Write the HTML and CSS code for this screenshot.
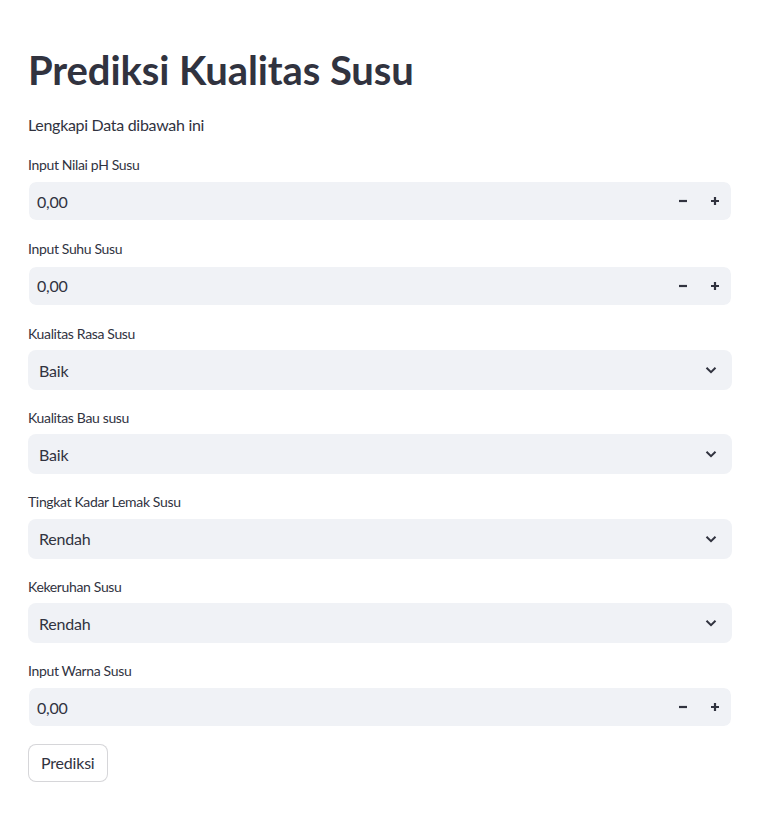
FILE: index.html
```html
<!DOCTYPE html>
<html lang="id">
<head>
<meta charset="utf-8">
<title>Prediksi Kualitas Susu</title>
<link rel="stylesheet" href="styles.css">
</head>
<body>
<main class="main">
  <h1 class="title">Prediksi Kualitas Susu</h1>
  <p class="lead">Lengkapi Data dibawah ini</p>

  <div class="field">
    <div class="label">Input Nilai pH Susu</div>
    <div class="num">
      <span class="num-value">0,00</span>
      <span class="step"><svg width="10" height="10" viewBox="0 0 10 10"><path d="M1 5h8" stroke="#31333f" stroke-width="2.2"/></svg></span>
      <span class="step"><svg width="10" height="10" viewBox="0 0 10 10"><path d="M1 5h8M5 1v8" stroke="#31333f" stroke-width="2.2"/></svg></span>
    </div>
  </div>

  <div class="field">
    <div class="label">Input Suhu Susu</div>
    <div class="num">
      <span class="num-value">0,00</span>
      <span class="step"><svg width="10" height="10" viewBox="0 0 10 10"><path d="M1 5h8" stroke="#31333f" stroke-width="2.2"/></svg></span>
      <span class="step"><svg width="10" height="10" viewBox="0 0 10 10"><path d="M1 5h8M5 1v8" stroke="#31333f" stroke-width="2.2"/></svg></span>
    </div>
  </div>

  <div class="field">
    <div class="label">Kualitas Rasa Susu</div>
    <div class="select">
      <span class="select-value">Baik</span>
      <svg class="chev" width="12" height="8" viewBox="0 0 12 8"><path d="M1.5 1.8L6 6.2l4.5-4.4" fill="none" stroke="#31333f" stroke-width="2"/></svg>
    </div>
  </div>

  <div class="field">
    <div class="label">Kualitas Bau susu</div>
    <div class="select">
      <span class="select-value">Baik</span>
      <svg class="chev" width="12" height="8" viewBox="0 0 12 8"><path d="M1.5 1.8L6 6.2l4.5-4.4" fill="none" stroke="#31333f" stroke-width="2"/></svg>
    </div>
  </div>

  <div class="field">
    <div class="label">Tingkat Kadar Lemak Susu</div>
    <div class="select">
      <span class="select-value">Rendah</span>
      <svg class="chev" width="12" height="8" viewBox="0 0 12 8"><path d="M1.5 1.8L6 6.2l4.5-4.4" fill="none" stroke="#31333f" stroke-width="2"/></svg>
    </div>
  </div>

  <div class="field">
    <div class="label">Kekeruhan Susu</div>
    <div class="select">
      <span class="select-value">Rendah</span>
      <svg class="chev" width="12" height="8" viewBox="0 0 12 8"><path d="M1.5 1.8L6 6.2l4.5-4.4" fill="none" stroke="#31333f" stroke-width="2"/></svg>
    </div>
  </div>

  <div class="field">
    <div class="label">Input Warna Susu</div>
    <div class="num">
      <span class="num-value">0,00</span>
      <span class="step"><svg width="10" height="10" viewBox="0 0 10 10"><path d="M1 5h8" stroke="#31333f" stroke-width="2.2"/></svg></span>
      <span class="step"><svg width="10" height="10" viewBox="0 0 10 10"><path d="M1 5h8M5 1v8" stroke="#31333f" stroke-width="2.2"/></svg></span>
    </div>
  </div>

  <div><button class="btn" type="button">Prediksi</button></div>
</main>
</body>
</html>
```

FILE: styles.css
```css
* { box-sizing: border-box; }

html, body {
  margin: 0;
  padding: 0;
  background: #ffffff;
}

body {
  font-family: Lato, "Noto Sans", sans-serif;
  color: #31333f;
}

.main {
  width: 704px;
  margin-left: 28px;
  padding-top: 44px;
  display: flex;
  flex-direction: column;
  gap: 16.33px;
}

.title {
  margin: 0;
  font-size: 40px;
  line-height: 52.8px;
  font-weight: 700;
  letter-spacing: -0.1px;
  color: #31333f;
}

.lead {
  margin: 0;
  font-size: 16px;
  line-height: 24px;
  letter-spacing: -0.3px;
}

.field {
  display: flex;
  flex-direction: column;
}

.label {
  height: 24px;
  margin-bottom: 4px;
  padding-bottom: 2px;
  display: flex;
  align-items: center;
  font-size: 14px;
  letter-spacing: -0.35px;
}

.num {
  height: 40px;
  border: 1px solid #ffffff;
  border-radius: 8px;
  background: #f0f2f6;
  background-clip: padding-box;
  display: flex;
  align-items: center;
}

.num-value {
  flex: 1;
  padding-left: 8px;
  font-size: 16px;
  letter-spacing: -0.2px;
}

.step {
  width: 32px;
  height: 38px;
  display: flex;
  align-items: center;
  justify-content: center;
}

.select {
  height: 40px;
  border-radius: 8px;
  background: #f0f2f6;
  display: flex;
  align-items: center;
  padding: 0 15px 0 11px;
}

.select-value {
  flex: 1;
  font-size: 16px;
  letter-spacing: -0.2px;
}

.chev { display: block; }

.btn {
  height: 38px;
  padding: 0 12px;
  border: 1px solid rgba(49, 51, 63, 0.2);
  border-radius: 8px;
  background: #ffffff;
  font-family: inherit;
  font-size: 16px;
  letter-spacing: -0.2px;
  color: #31333f;
}
```
